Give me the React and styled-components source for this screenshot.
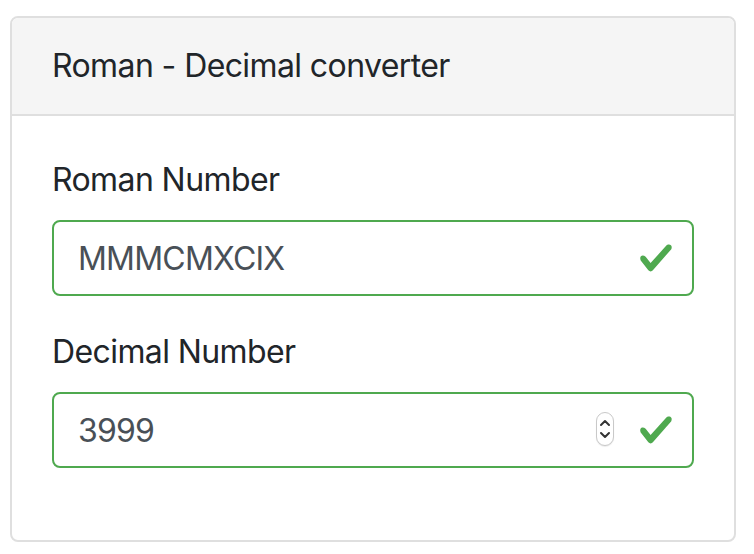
import styled, { createGlobalStyle } from "styled-components";
import { useState } from "react";

const GlobalStyle = createGlobalStyle`
  body {
    margin: 0;
    background: #fff;
    font-family: Inter, "Helvetica Neue", "Liberation Sans", sans-serif;
    color: #212529;
  }
  * {
    box-sizing: border-box;
  }
`;

const green = "#4fa94f";

const checkIcon = `url("data:image/svg+xml,%3csvg xmlns='http://www.w3.org/2000/svg' viewBox='0 0 8 8'%3e%3cpath fill='%234fa94f' d='M2.3 6.73L.6 4.53c-.4-1.04.46-1.4 1.1-.8l1.1 1.4 3.4-3.8c.6-.63 1.6-.27 1.2.7l-4 4.6c-.43.5-.8.4-1.1.1z'/%3e%3c/svg%3e")`;

const Page = styled.div`
  padding: 16px 18px 0 10px;
`;

const Card = styled.div`
  border: 2px solid #dfdfdf;
  border-radius: 8px;
  background: #fff;
  overflow: hidden;
`;

const CardHeader = styled.div`
  background: #f5f5f5;
  border-bottom: 2px solid #dfdfdf;
  padding: 24px 40px;
  font-size: 32px;
  line-height: 48px;
  letter-spacing: -0.6px;
`;

const CardBody = styled.div`
  padding: 40px;
`;

const FormGroup = styled.div`
  margin-bottom: 32px;
`;

const Label = styled.label`
  display: block;
  font-size: 32px;
  line-height: 48px;
  letter-spacing: -0.6px;
  margin-bottom: 16px;
`;

const Field = styled.div`
  position: relative;
`;

const Input = styled.input`
  display: block;
  width: 100%;
  height: 76px;
  padding: 12px 72px 12px 24px;
  font-family: inherit;
  font-size: 32px;
  line-height: 48px;
  letter-spacing: -0.8px;
  color: #495057;
  background: #fff ${checkIcon} no-repeat right 18px center / 36px 36px;
  border: 2px solid ${green};
  border-radius: 8px;
  outline: none;
  -moz-appearance: textfield;

  &::-webkit-inner-spin-button,
  &::-webkit-outer-spin-button {
    -webkit-appearance: none;
    margin: 0;
  }
`;

const Spinner = styled.div`
  position: absolute;
  right: 80px;
  top: 20px;
  width: 18px;
  height: 34px;
  border: 1px solid #c9c9c9;
  border-radius: 9px;
  background: #fff;
  box-shadow: 0 1px 1px rgba(0, 0, 0, 0.08);
  display: flex;
  align-items: center;
  justify-content: center;
`;

const RomanDecimal = () => {
  const [roman, setRoman] = useState("MMMCMXCIX");
  const [decimal, setDecimal] = useState("3999");

  return (
    <Page>
      <GlobalStyle />
      <Card>
        <CardHeader>Roman - Decimal converter</CardHeader>
        <CardBody>
          <FormGroup>
            <Label htmlFor="roman">Roman Number</Label>
            <Field>
              <Input
                id="roman"
                type="text"
                value={roman}
                onChange={(e) => setRoman(e.target.value)}
              />
            </Field>
          </FormGroup>
          <FormGroup>
            <Label htmlFor="decimal">Decimal Number</Label>
            <Field>
              <Input
                id="decimal"
                type="number"
                value={decimal}
                onChange={(e) => setDecimal(e.target.value)}
              />
              <Spinner>
                <svg width="12" height="26" viewBox="0 0 12 26" fill="none">
                  <path d="M2 9l4-4 4 4" stroke="#333" strokeWidth="2" strokeLinecap="round" strokeLinejoin="round" />
                  <path d="M2 17l4 4 4-4" stroke="#333" strokeWidth="2" strokeLinecap="round" strokeLinejoin="round" />
                </svg>
              </Spinner>
            </Field>
          </FormGroup>
        </CardBody>
      </Card>
    </Page>
  );
};

export default RomanDecimal;
